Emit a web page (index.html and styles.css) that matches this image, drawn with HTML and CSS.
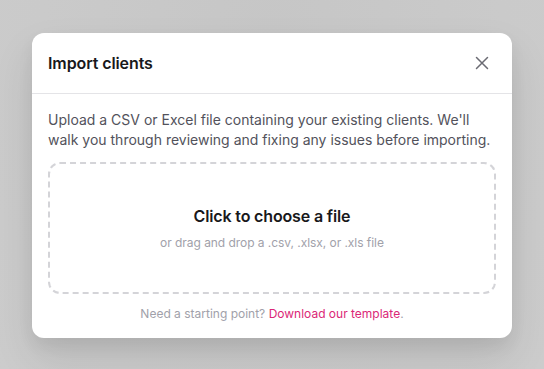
FILE: index.html
```html
<!DOCTYPE html>
<html>
<head>
<meta charset="utf-8">
<link rel="stylesheet" href="styles.css">
</head>
<body>
<div class="overlay">
  <div class="modal">
    <div class="modal-header">
      <h2 class="modal-title">Import clients</h2>
      <button class="close-btn" aria-label="Close">
        <svg width="16" height="16" viewBox="0 0 16 16" fill="none" stroke="currentColor" stroke-width="1.5" stroke-linecap="round"><path d="M2.5 2.5l11 11M13.5 2.5l-11 11"/></svg>
      </button>
    </div>
    <div class="modal-body">
      <p class="intro">Upload a CSV or Excel file containing your existing clients. We'll walk you through reviewing and fixing any issues before importing.</p>
      <div class="dropzone">
        <div class="drop-title">Click to choose a file</div>
        <div class="drop-sub">or drag and drop a .csv, .xlsx, or .xls file</div>
      </div>
      <p class="footer-note">Need a starting point? <a href="#" class="link">Download our template</a>.</p>
    </div>
  </div>
</div>
</body>
</html>
```
FILE: styles.css
```css
* { box-sizing: border-box; }
html, body { margin: 0; height: 100%; }
body {
  font-family: Inter, "Noto Sans", sans-serif;
  background: #cbcbcb;
}
.overlay {
  height: 100%;
  display: flex;
  align-items: center;
  justify-content: center;
  padding-top: 1px;
  background: radial-gradient(ellipse at 50% 10%, #c6c6c6 0%, #cacaca 60%, #cccccc 100%);
}
.modal {
  width: 480px;
  background: #fff;
  border-radius: 12px;
  box-shadow: 0 20px 40px rgba(0,0,0,0.10), 0 8px 16px rgba(0,0,0,0.06);
  overflow: hidden;
}
.modal-header {
  display: flex;
  align-items: center;
  justify-content: space-between;
  padding: 16px;
  height: 61px;
  border-bottom: 1px solid #e4e4e7;
}
.modal-title {
  margin: 0;
  font-size: 16px;
  font-weight: 600;
  line-height: 28px;
  color: #18181b;
  letter-spacing: -0.1px;
}
.close-btn {
  border: 0;
  background: none;
  padding: 0;
  width: 24px;
  height: 24px;
  display: flex;
  align-items: center;
  justify-content: center;
  color: #6b6b73;
  margin-right: 2px;
}
.modal-body {
  padding: 16px 16px 16px;
}
.intro {
  margin: 0;
  font-size: 14px;
  line-height: 20px;
  color: #52525b;
}
.dropzone {
  margin-top: 12px;
  height: 132px;
  border: 2px dashed #d4d4d8;
  border-radius: 12px;
  display: flex;
  flex-direction: column;
  align-items: center;
  justify-content: center;
  gap: 7px;
}
.drop-title {
  font-size: 16px;
  font-weight: 600;
  line-height: 24px;
  color: #18181b;
  letter-spacing: -0.15px;
}
.drop-sub {
  font-size: 12px;
  line-height: 16px;
  color: #a1a1aa;
  letter-spacing: -0.05px;
}
.footer-note {
  margin: 12px 0 0;
  text-align: center;
  font-size: 12px;
  line-height: 16px;
  color: #a1a1aa;
}
.link {
  color: #db2777;
  text-decoration: none;
}
```
